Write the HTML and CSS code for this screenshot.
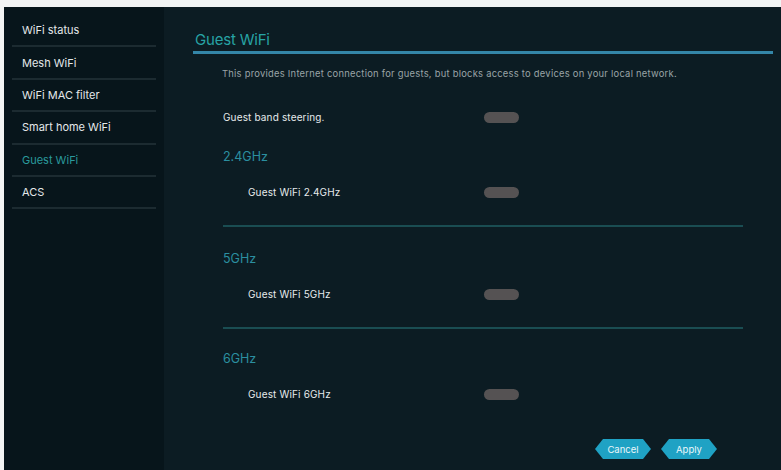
FILE: index.html
```html
<!DOCTYPE html>
<html>
<head>
<meta charset="utf-8">
<link rel="stylesheet" href="styles.css">
</head>
<body>
<div class="frame">
  <nav class="sidebar">
    <div class="item">WiFi status</div>
    <div class="item">Mesh WiFi</div>
    <div class="item">WiFi MAC filter</div>
    <div class="item">Smart home WiFi</div>
    <div class="item active">Guest WiFi</div>
    <div class="item">ACS</div>
  </nav>
  <main class="main">
    <h1 class="title">Guest WiFi</h1>
    <p class="desc">This provides Internet connection for guests, but blocks access to devices on your local network.</p>
    <div class="row top"><span class="label">Guest band steering.</span><span class="toggle"></span></div>
    <section class="band">
      <div class="band-title">2.4GHz</div>
      <div class="row sub"><span class="label">Guest WiFi 2.4GHz</span><span class="toggle"></span></div>
    </section>
    <section class="band">
      <div class="band-title">5GHz</div>
      <div class="row sub"><span class="label">Guest WiFi 5GHz</span><span class="toggle"></span></div>
    </section>
    <section class="band last">
      <div class="band-title">6GHz</div>
      <div class="row sub"><span class="label">Guest WiFi 6GHz</span><span class="toggle"></span></div>
    </section>
    <div class="actions">
      <button class="btn">Cancel</button>
      <button class="btn">Apply</button>
    </div>
  </main>
</div>
</body>
</html>
```
FILE: styles.css
```css
* { box-sizing: border-box; }
html, body { margin: 0; padding: 0; background: #f2f4f4; }
body { font-family: "Inter", "Noto Sans", sans-serif; }
.frame {
  margin: 7px 0 0 4px;
  width: 777px;
  height: 463px;
  display: flex;
  background: #0c1c23;
}
.sidebar {
  width: 160px;
  background: #07151b;
  padding: 8px 8px 0 8px;
  flex: none;
}
.item {
  height: 32.4px;
  display: flex;
  align-items: center;
  padding-left: 10px;
  font-size: 11px;
  color: #e4e8ea;
  border-bottom: 2px solid #1c2b31;
  letter-spacing: 0;
}
.item.active { color: #2a9a9c; }
.main {
  flex: 1;
  padding: 23px 8px 0 29px;
  display: flex;
  flex-direction: column;
}
.title {
  margin: 0;
  font-size: 15px;
  font-weight: 400;
  color: #27a3a5;
  padding: 0 0 2px 2px;
  border-bottom: 3px solid #3486a8;
  letter-spacing: -0.2px;
}
.desc {
  margin: 14px 0 0 29px;
  font-size: 9.4px;
  color: #9aa4a7;
  letter-spacing: 0.25px;
}
.row {
  display: flex;
  align-items: center;
  height: 14px;
}
.row.top { margin: 31px 0 0 30px; }
.label {
  font-size: 10px;
  color: #e6eaeb;
  letter-spacing: 0.15px;
}
.row.top .label { width: 261px; }
.row.sub .label { width: 236px; }
.toggle {
  width: 35px;
  height: 11px;
  border-radius: 6px;
  background: #555253;
}
.band {
  margin-left: 30px;
  width: 520px;
  border-bottom: 2px solid #1a4d52;
  padding: 25px 0 26px 0;
}
.band + .band { padding-top: 24px; }
.band.last { border-bottom: none; padding-top: 22px; }
.band-title {
  font-size: 12.5px;
  color: #2b8fa0;
  letter-spacing: 0;
  height: 14px;
}
.band .row.sub { margin: 22px 0 0 25px; }
.actions {
  display: flex;
  gap: 10px;
  justify-content: flex-end;
  padding-right: 56px;
  margin-top: 12px;
}
.btn {
  width: 56px;
  height: 20px;
  border: none;
  background: #1fa2c4;
  color: #e9f6fa;
  font-family: inherit;
  font-size: 9.5px;
  clip-path: polygon(8px 0, calc(100% - 8px) 0, 100% 50%, calc(100% - 8px) 100%, 8px 100%, 0 50%);
  padding: 0;
}
```
